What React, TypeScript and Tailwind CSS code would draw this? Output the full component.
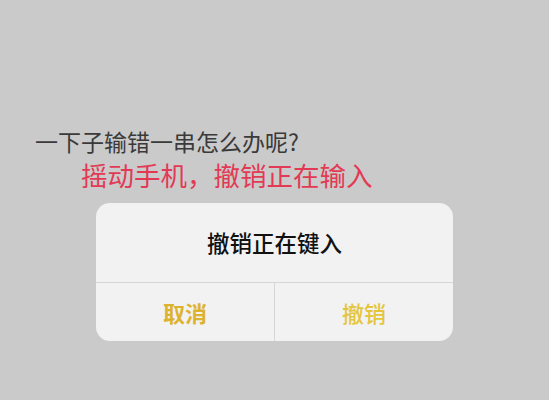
import React from "react";

const cjk = { fontFamily: '"Noto Sans CJK SC", "Noto Sans", sans-serif' };

export default function App() {
  return (
    <div className="w-[549px] h-[400px] bg-[#cacaca] overflow-hidden" style={cjk}>
      <div className="pt-[127px] pl-[35px] text-[23px] leading-[28px] text-[#3a3a3a]">
        一下子输错一串怎么办呢?
      </div>
      <div className="mt-[4px] pl-[81px] text-[26.5px] leading-[32px] text-[#e23a55]">
        摇动手机，撤销正在输入
      </div>
      <div className="ml-[96px] mt-[12px] w-[357px] rounded-[14px] bg-[#f2f2f2] overflow-hidden">
        <div className="h-[79px] flex items-center justify-center text-[22.5px] font-medium text-[#111]">
          撤销正在键入
        </div>
        <div className="flex h-[59px] border-t border-[#d6d6d6]">
          <div className="flex-1 flex items-center justify-center text-[22px] font-bold text-[#ddb22e] border-r border-[#d6d6d6]">
            取消
          </div>
          <div className="flex-1 flex items-center justify-center text-[22px] font-medium text-[#e4c53c]">
            撤销
          </div>
        </div>
      </div>
    </div>
  );
}
